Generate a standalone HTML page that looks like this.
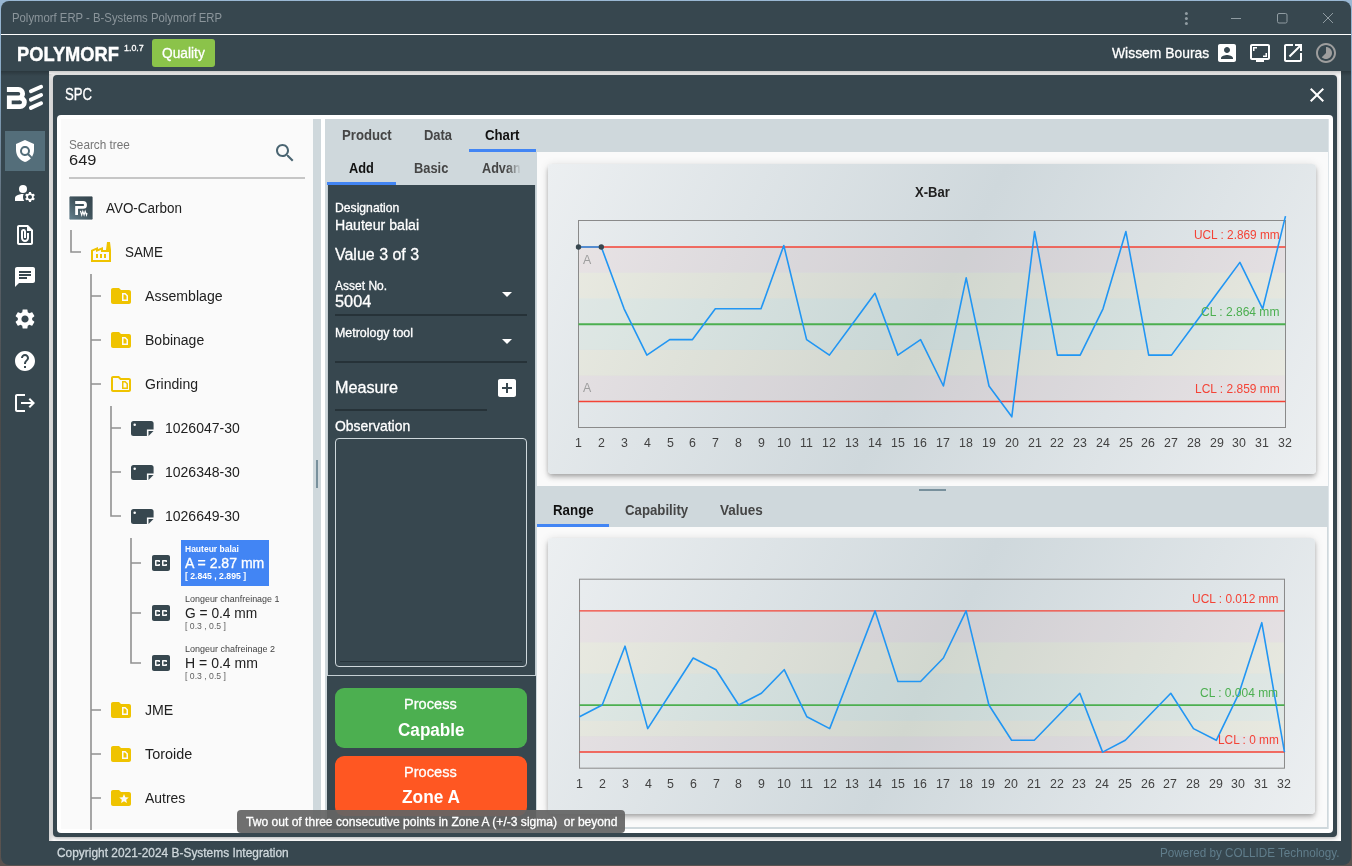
<!DOCTYPE html>
<html><head><meta charset="utf-8"><title>Polymorf ERP</title><style>html,body{margin:0;padding:0}body{width:1352px;height:866px;overflow:hidden;position:relative;background:linear-gradient(180deg,#9ab8d4 0,#86a6c2 90px,#5a6670 220px,#4b4a4a 420px,#5a5350 866px);font-family:"Liberation Sans",sans-serif}#r{position:absolute;left:0;top:0;width:1352px;height:866px;overflow:hidden}#r>div,#r>svg,#r>span{position:absolute;display:block;box-sizing:border-box}#r>span{white-space:pre;transform-origin:0 0}</style></head><body><div id="r">
<div style="left:1px;top:1px;width:1350px;height:863.6px;background:#37474f;border-radius:8px"></div>
<div style="left:1px;top:34px;width:1350px;height:1.2px;background:#fff;"></div>
<div style="left:49px;top:71px;width:1292px;height:770px;background:#fff;background:linear-gradient(#c9c9c9,#efefef 3px,#fff 6px,#fff)"></div>
<div style="left:1px;top:71px;width:48px;height:5px;background:;background:linear-gradient(rgba(0,0,0,.22),rgba(0,0,0,0))"></div>
<div style="left:1341px;top:71px;width:10px;height:5px;background:;background:linear-gradient(rgba(0,0,0,.22),rgba(0,0,0,0))"></div>
<div style="left:49px;top:74px;width:4.5px;height:767px;background:;background:linear-gradient(90deg,rgba(0,0,0,.16),rgba(0,0,0,0))"></div>
<div style="left:53px;top:75px;width:1284px;height:762px;background:#37474f;border-radius:4px;box-shadow:0 1px 4px rgba(0,0,0,.32)"></div>
<div style="left:57px;top:115px;width:1276px;height:718px;background:#fff;border-radius:4px"></div>
<div style="left:61px;top:119px;width:252px;height:710px;background:#fafafa;"></div>
<div style="left:313px;top:119px;width:8px;height:710px;background:#cfd8dc;"></div>
<div style="left:316px;top:460px;width:2px;height:28px;background:#78909c;"></div>
<div style="left:325px;top:119px;width:1003px;height:710px;background:#cfd8dc;"></div>
<div style="left:326.5px;top:185px;width:209px;height:644px;background:#37474f;"></div>
<div style="left:326.5px;top:185px;width:0.6px;height:491px;background:#c3cdd2;"></div>
<div style="left:534.8px;top:185px;width:0.7px;height:491px;background:#c3cdd2;"></div>
<div style="left:326.5px;top:675px;width:209px;height:1px;background:#c5cfd4;"></div>
<div style="left:1328px;top:119px;width:1.2px;height:710px;background:#dde4e8;"></div>
<div style="left:536.5px;top:152px;width:791.5px;height:334px;background:#fafafa;"></div>
<div style="left:536.5px;top:527px;width:790px;height:300px;background:#fafafa;"></div>
<svg style="left:1170px;top:0" width="180" height="34" viewBox="0 0 180 34" fill="none" stroke="#909ca2" stroke-width="1"><circle cx="16.4" cy="13.5" r="1.5" fill="#909ca2" stroke="none"/><circle cx="16.4" cy="18.5" r="1.5" fill="#909ca2" stroke="none"/><circle cx="16.4" cy="23.4" r="1.5" fill="#909ca2" stroke="none"/><path d="M61 18.5h10"/><rect x="107.5" y="13.5" width="9.5" height="9.5" rx="1.5"/><path d="M153 13l10 10M163 13l-10 10"/></svg>
<div style="left:152px;top:39px;width:63px;height:28px;background:#8bc34a;border-radius:3px"></div>
<svg style="left:1215px;top:41px" width="24" height="24" viewBox="0 0 24 24" fill="#fff"><path d="M3 5v14c0 1.1.89 2 2 2h14c1.1 0 2-.9 2-2V5c0-1.1-.9-2-2-2H5c-1.11 0-2 .9-2 2zm12 4c0 1.66-1.34 3-3 3s-3-1.34-3-3 1.340-3 3-3 3 1.340 3 3zm-9 8c0-2 4-3.100 6-3.100s6 1.100 6 3.100v1H6v-1z"/></svg>
<svg style="left:1248px;top:41px" width="24" height="24" viewBox="0 0 24 24" fill="#fff"><path d="M20 3H4c-1.110 0-2 .890-2 2v12c0 1.100.890 2 2 2h4v2h8v-2h4c1.100 0 2-.900 2-2V5c0-1.110-.900-2-2-2zm0 14H4V5h16v12z"/><path d="M6.500 7.500H9V6H5v4h1.500zM19 12h-1.500v2.500H15V16h4z"/></svg>
<svg style="left:1281px;top:41px" width="24" height="24" viewBox="0 0 24 24" fill="#fff"><path d="M19 19H5V5h7V3H5c-1.110 0-2 .900-2 2v14c0 1.100.890 2 2 2h14c1.100 0 2-.900 2-2v-7h-2v7zM14 3v2h3.590l-9.830 9.830 1.410 1.410L19 6.410V10h2V3h-7z"/></svg>
<svg style="left:1314px;top:41px" width="24" height="24" viewBox="0 0 24 24" fill="#9e9e9e"><path d="M16.240 7.760C15.070 6.590 13.540 6 12 6v6l-4.240 4.240c2.340 2.340 6.140 2.340 8.490 0 2.340-2.340 2.340-6.140-.010-8.480zM12 2C6.480 2 2 6.480 2 12s4.480 10 10 10 10-4.480 10-10S17.520 2 12 2zm0 18c-4.420 0-8-3.580-8-8s3.580-8 8-8 8 3.580 8 8-3.580 8-8 8z"/></svg>
<svg style="left:0;top:80px" width="50" height="36" viewBox="0 80 50 36" fill="none" stroke="#fff"><path d="M6.900 89.500H18.400a4.250 4.250 0 0 1 0 8.500H9.300V106.600H20.100a4.300 4.300 0 0 0 0-8.600" stroke-width="4.800" stroke-linejoin="miter"/><path d="M30.900 91.300L41.100 86.700M30.900 99.600L41.100 95M30.900 107.900L41.100 103.300" stroke-width="3.900" stroke-linecap="round"/></svg>
<div style="left:5px;top:131px;width:40px;height:40px;background:#546e7a;"></div>
<svg style="left:13px;top:139px" width="24" height="24" viewBox="0 0 24 24" fill="#fff"><path d="M21 5l-9-4-9 4v6c0 5.55 3.84 10.74 9 12 2.3-.56 4.33-1.9 5.88-3.71l-3.12-3.12c-1.94 1.29-4.58 1.07-6.29-.64-1.95-1.95-1.95-5.12 0-7.07 1.95-1.95 5.12-1.95 7.07 0 1.71 1.71 1.92 4.35.64 6.29l2.9 2.9C20.29 15.69 21 13.38 21 11V5z"/><circle cx="12" cy="12" r="3"/></svg>
<svg style="left:13px;top:181px" width="24" height="24" viewBox="0 0 24 24" fill="#fff"><circle cx="10" cy="8" r="4"/><path d="M10.67 13.02c-.22-.01-.44-.02-.67-.02-2.42 0-4.68.67-6.61 1.82-.88.52-1.39 1.5-1.39 2.53V20h9.26c-.79-1.13-1.26-2.51-1.26-4 0-1.07.25-2.07.67-2.98zM20.75 16c0-.22-.03-.42-.06-.63l1.14-1.01-1-1.73-1.45.49c-.32-.27-.68-.48-1.08-.63L18 11h-2l-.3 1.49c-.4.15-.76.36-1.08.63l-1.45-.49-1 1.73 1.14 1.01c-.03.21-.06.41-.06.63s.03.42.06.63l-1.14 1.01 1 1.73 1.45-.49c.32.27.68.48 1.08.63L16 21h2l.3-1.49c.4-.15.76-.36 1.08-.63l1.45.49 1-1.73-1.14-1.01c.03-.21.06-.41.06-.63zM17 18c-1.1 0-2-.9-2-2s.9-2 2-2 2 .9 2 2-.9 2-2 2z"/></svg>
<svg style="left:13px;top:223px" width="24" height="24" viewBox="0 0 24 24" fill="#fff"><path d="M15 2H6c-1.1 0-2 .9-2 2v16c0 1.1.9 2 2 2h12c1.1 0 2-.9 2-2V7l-5-5zM6 20V4h8v4h4v12H6zm10-10v5c0 2.21-1.79 4-4 4s-4-1.79-4-4V8.5c0-1.47 1.26-2.64 2.76-2.49 1.3.13 2.24 1.32 2.24 2.63V15h-2V8.5c0-.28-.22-.5-.5-.5s-.5.22-.5.5V15c0 1.1.9 2 2 2s2-.9 2-2v-5h2z"/></svg>
<svg style="left:13px;top:265px" width="24" height="24" viewBox="0 0 24 24" fill="#fff"><path d="M20 2H4c-1.1 0-1.99.9-1.99 2L2 22l4-4h14c1.1 0 2-.9 2-2V4c0-1.1-.9-2-2-2zM6 9h12v2H6V9zm8 5H6v-2h8v2zm4-6H6V6h12v2z"/></svg>
<svg style="left:13px;top:307px" width="24" height="24" viewBox="0 0 24 24" fill="#fff"><path d="M19.14 12.94c.04-.3.06-.61.06-.94 0-.32-.02-.64-.07-.94l2.03-1.58c.18-.14.23-.41.12-.61l-1.92-3.32c-.12-.22-.37-.29-.59-.22l-2.39.96c-.5-.38-1.03-.7-1.62-.94l-.36-2.54c-.04-.24-.24-.41-.48-.41h-3.84c-.24 0-.43.17-.47.41l-.36 2.54c-.59.24-1.13.57-1.62.94l-2.39-.96c-.22-.08-.47 0-.59.22L2.74 8.87c-.12.21-.08.47.12.61l2.03 1.58c-.05.3-.09.63-.09.94s.02.64.07.94l-2.03 1.58c-.18.14-.23.41-.12.61l1.92 3.32c.12.22.37.29.59.22l2.39-.96c.5.38 1.03.7 1.62.94l.36 2.54c.05.24.24.41.48.41h3.84c.24 0 .44-.17.47-.41l.36-2.54c.59-.24 1.13-.56 1.62-.94l2.39.96c.22.08.47 0 .59-.22l1.92-3.32c.12-.22.07-.47-.12-.61l-2.01-1.58zM12 15.6c-1.98 0-3.6-1.62-3.6-3.6s1.62-3.6 3.6-3.6 3.6 1.62 3.6 3.6-1.62 3.6-3.6 3.6z"/></svg>
<svg style="left:13px;top:349px" width="24" height="24" viewBox="0 0 24 24" fill="#fff"><path d="M12 2C6.48 2 2 6.48 2 12s4.48 10 10 10 10-4.48 10-10S17.52 2 12 2zm1 17h-2v-2h2v2zm2.07-7.75l-.9.92C13.45 12.9 13 13.5 13 15h-2v-.5c0-1.1.45-2.1 1.17-2.83l1.24-1.26c.37-.36.59-.86.59-1.41 0-1.1-.9-2-2-2s-2 .9-2 2H8c0-2.21 1.79-4 4-4s4 1.79 4 4c0 .88-.36 1.68-.93 2.25z"/></svg>
<svg style="left:13px;top:391px" width="24" height="24" viewBox="0 0 24 24" fill="#fff"><path d="M17 7l-1.41 1.41L18.17 11H8v2h10.17l-2.58 2.58L17 17l5-5zM4 5h8V3H4c-1.1 0-2 .9-2 2v14c0 1.1.9 2 2 2h8v-2H4V5z"/></svg>
<svg style="left:1305px;top:83px" width="24" height="24" viewBox="0 0 24 24" fill="#fff"><path d="M19 6.410L17.590 5 12 10.590 6.410 5 5 6.410 10.590 12 5 17.590 6.410 19 12 13.410 17.590 19 19 17.590 13.410 12z"/></svg>
<div style="left:69px;top:177px;width:236px;height:1.5px;background:#c6c6c6;"></div>
<svg style="left:273px;top:141.3px" width="24" height="24" viewBox="0 0 24 24" fill="#4a6572"><path d="M15.500 14h-.790l-.280-.270C15.410 12.590 16 11.110 16 9.500 16 5.910 13.090 3 9.500 3S3 5.910 3 9.500 5.910 16 9.500 16c1.610 0 3.090-.590 4.230-1.570l.270.280v.790l5 4.990L20.490 19l-4.990-5zm-6 0C7.010 14 5 11.990 5 9.500S7.010 5 9.500 5 14 7.010 14 9.500 11.990 14 9.500 14z"/></svg>
<svg style="left:68px;top:195px" width="26" height="26" viewBox="-1 -1 26 26"><defs><linearGradient id="ag" x1="1" y1="0" x2="0" y2="1"><stop offset="0" stop-color="#33444c"/><stop offset=".45" stop-color="#3f525b"/><stop offset="1" stop-color="#65828f"/></linearGradient></defs><rect x="0" y="0" width="24" height="24" rx="1.500" fill="url(#ag)" stroke="#fff" stroke-width=".8"/><path d="M6.200 6.500H14.100a2.450 2.450 0 0 1 0 4.900H7.600V19" fill="none" stroke="#fff" stroke-width="2.800"/><path d="M11.400 14.900L12.700 19 13.800 15.300 15.100 19 16.200 15.300 17.500 19 18 17" fill="none" stroke="#fff" stroke-width="1.150"/></svg>
<svg style="left:60px;top:220px" width="100" height="610" viewBox="60 220 100 610" fill="none" stroke="#919191" stroke-width="1.600"><path d="M71 230V252H81"/><path d="M91 274V830M91 296H101M91 340H101M91 384H101M91 710H101M91 754H101M91 798H101"/><path d="M111 406V516H121M111 428H121M111 472H121"/><path d="M131 538V663H141M131 563H141M131 613H141"/></svg>
<svg style="left:89px;top:240px" width="24" height="24" viewBox="0 0 24 24" fill="#efc300"><path d="M22 22H2V10l7-3v2l5-2v3h3l1-8h3l1 8V22zM12 9.950l-5 2V10l-3 1.320V20h16v-8h-8V9.950zM11 18h2v-4h-2V18zM7 18h2v-4H7V18zM17 14h-2v4h2V14z"/></svg>
<svg style="left:109px;top:284px" width="24" height="24" viewBox="0 0 24 24" fill="#efc300"><path d="M15.880 10.500l1.620 1.620v3.380l-3 0v-5H15.880zM22 8v10c0 1.100-.900 2-2 2H4c-1.100 0-2-.900-2-2L2.010 6C2.010 4.900 2.900 4 4 4h6l2 2h8C21.100 6 22 6.900 22 8zM19 11.500L16.500 9H13v8h6V11.500z"/></svg>
<svg style="left:109px;top:328px" width="24" height="24" viewBox="0 0 24 24" fill="#efc300"><path d="M15.880 10.500l1.620 1.620v3.380l-3 0v-5H15.880zM22 8v10c0 1.100-.900 2-2 2H4c-1.100 0-2-.900-2-2L2.010 6C2.010 4.900 2.900 4 4 4h6l2 2h8C21.100 6 22 6.900 22 8zM19 11.500L16.500 9H13v8h6V11.500z"/></svg>
<svg style="left:109px;top:372px" width="24" height="24" viewBox="0 0 24 24" fill="#efc300"><path d="M20 6h-8l-2-2H4C2.900 4 2.010 4.900 2.010 6L2 18c0 1.100.900 2 2 2h16c1.100 0 2-.900 2-2V8C22 6.900 21.100 6 20 6zM20 18H4V6h5.170l2 2H20V18zM17.500 12.120v3.380l-3 0v-5h1.380L17.500 12.120zM13 9v8l6 0v-5.500L16.500 9H13z"/></svg>
<svg style="left:109px;top:698px" width="24" height="24" viewBox="0 0 24 24" fill="#efc300"><path d="M15.880 10.500l1.620 1.620v3.380l-3 0v-5H15.880zM22 8v10c0 1.100-.900 2-2 2H4c-1.100 0-2-.900-2-2L2.010 6C2.010 4.900 2.900 4 4 4h6l2 2h8C21.100 6 22 6.900 22 8zM19 11.500L16.500 9H13v8h6V11.500z"/></svg>
<svg style="left:109px;top:742px" width="24" height="24" viewBox="0 0 24 24" fill="#efc300"><path d="M15.880 10.500l1.620 1.620v3.380l-3 0v-5H15.880zM22 8v10c0 1.100-.900 2-2 2H4c-1.100 0-2-.900-2-2L2.010 6C2.010 4.900 2.900 4 4 4h6l2 2h8C21.100 6 22 6.900 22 8zM19 11.500L16.500 9H13v8h6V11.500z"/></svg>
<svg style="left:109px;top:786px" width="24" height="24" viewBox="0 0 24 24" fill="#efc300"><path d="M20 6h-8l-2-2H4c-1.100 0-1.990.900-1.990 2L2 18c0 1.100.900 2 2 2h16c1.100 0 2-.900 2-2V8c0-1.100-.900-2-2-2zm-2.060 11L15 15.280 12.060 17l.780-3.330-2.590-2.240 3.410-.290L15 8l1.340 3.140 3.410.290-2.590 2.240.780 3.330z"/></svg>
<svg style="left:129px;top:418px" width="27" height="20" viewBox="-2 -3 27 20"><path d="M2.500 0H20.100a2.500 2.500 0 0 1 2.500 2.500V8.400H15.900V15H2.500A2.500 2.500 0 0 1 0 12.500V2.500A2.500 2.500 0 0 1 2.500 0z" fill="#37474f" stroke="#fff" stroke-width="1" paint-order="stroke"/><path d="M17.500 10H22.500L17.500 15z" fill="#37474f"/><circle cx="3.700" cy="3.800" r="1.250" fill="#fff"/></svg>
<svg style="left:129px;top:462px" width="27" height="20" viewBox="-2 -3 27 20"><path d="M2.500 0H20.100a2.500 2.500 0 0 1 2.500 2.500V8.400H15.900V15H2.500A2.500 2.500 0 0 1 0 12.500V2.500A2.500 2.500 0 0 1 2.500 0z" fill="#37474f" stroke="#fff" stroke-width="1" paint-order="stroke"/><path d="M17.500 10H22.500L17.500 15z" fill="#37474f"/><circle cx="3.700" cy="3.800" r="1.250" fill="#fff"/></svg>
<svg style="left:129px;top:506px" width="27" height="20" viewBox="-2 -3 27 20"><path d="M2.500 0H20.100a2.500 2.500 0 0 1 2.500 2.500V8.400H15.900V15H2.500A2.500 2.500 0 0 1 0 12.500V2.500A2.500 2.500 0 0 1 2.500 0z" fill="#37474f" stroke="#fff" stroke-width="1" paint-order="stroke"/><path d="M17.500 10H22.500L17.500 15z" fill="#37474f"/><circle cx="3.700" cy="3.800" r="1.250" fill="#fff"/></svg>
<div style="left:181px;top:540px;width:88px;height:46px;background:#4285f4;"></div>
<svg style="left:149px;top:551px" width="24" height="24" viewBox="0 0 24 24" fill="#37474f"><path d="M19 4H5c-1.110 0-2 .900-2 2v12c0 1.100.890 2 2 2h14c1.100 0 2-.900 2-2V6c0-1.100-.900-2-2-2zm-8 7H9.500v-.500h-2v3h2V13H11v1c0 .550-.450 1-1 1H7c-.550 0-1-.450-1-1v-4c0-.550.450-1 1-1h3c.550 0 1 .450 1 1v1zm7 0h-1.500v-.500h-2v3h2V13H18v1c0 .550-.450 1-1 1h-3c-.550 0-1-.450-1-1v-4c0-.550.450-1 1-1h3c.550 0 1 .450 1 1v1z"/></svg>
<svg style="left:149px;top:601px" width="24" height="24" viewBox="0 0 24 24" fill="#37474f"><path d="M19 4H5c-1.110 0-2 .900-2 2v12c0 1.100.890 2 2 2h14c1.100 0 2-.900 2-2V6c0-1.100-.900-2-2-2zm-8 7H9.500v-.500h-2v3h2V13H11v1c0 .550-.450 1-1 1H7c-.550 0-1-.450-1-1v-4c0-.550.450-1 1-1h3c.550 0 1 .450 1 1v1zm7 0h-1.500v-.500h-2v3h2V13H18v1c0 .550-.450 1-1 1h-3c-.550 0-1-.450-1-1v-4c0-.550.450-1 1-1h3c.550 0 1 .450 1 1v1z"/></svg>
<svg style="left:149px;top:651px" width="24" height="24" viewBox="0 0 24 24" fill="#37474f"><path d="M19 4H5c-1.110 0-2 .900-2 2v12c0 1.100.890 2 2 2h14c1.100 0 2-.900 2-2V6c0-1.100-.900-2-2-2zm-8 7H9.500v-.500h-2v3h2V13H11v1c0 .550-.450 1-1 1H7c-.550 0-1-.450-1-1v-4c0-.550.450-1 1-1h3c.550 0 1 .450 1 1v1zm7 0h-1.500v-.500h-2v3h2V13H18v1c0 .550-.450 1-1 1h-3c-.550 0-1-.450-1-1v-4c0-.550.450-1 1-1h3c.550 0 1 .450 1 1v1z"/></svg>
<div style="left:469px;top:149px;width:67px;height:3px;background:#4285f4;"></div>
<div style="left:327px;top:182px;width:69.3px;height:3px;background:#4285f4;"></div>
<svg style="left:495.2px;top:282px" width="24" height="24" viewBox="0 0 24 24" fill="#fff"><path d="M7 10l5 5 5-5z"/></svg>
<div style="left:335.3px;top:314.3px;width:191.6px;height:1.5px;background:#263238;"></div>
<svg style="left:495.2px;top:329px" width="24" height="24" viewBox="0 0 24 24" fill="#fff"><path d="M7 10l5 5 5-5z"/></svg>
<div style="left:335.3px;top:361.4px;width:191.6px;height:1.5px;background:#263238;"></div>
<svg style="left:494.8px;top:376px" width="24" height="24" viewBox="0 0 24 24" fill="#fff"><path d="M19 3H5c-1.110 0-2 .900-2 2v14c0 1.100.890 2 2 2h14c1.100 0 2-.900 2-2V5c0-1.100-.900-2-2-2zm-2 10h-4v4h-2v-4H7v-2h4V7h2v4h4v2z"/></svg>
<div style="left:335.3px;top:409.2px;width:151.6px;height:1.5px;background:#263238;"></div>
<div style="left:335.2px;top:438.400px;width:191.700px;height:228.400px;border:1px solid #cfd8dc;border-radius:4px"></div>
<div style="left:340px;top:661.2px;width:182px;height:1.3px;background:#27343b;"></div>
<div style="left:335.2px;top:688px;width:192px;height:60px;background:#4caf50;border-radius:9px"></div>
<div style="left:335.2px;top:756px;width:192px;height:60px;background:#ff5722;border-radius:9px"></div>
<div style="left:919px;top:489px;width:26.5px;height:1.8px;background:#78909c;"></div>
<div style="left:537px;top:523.8px;width:72px;height:3.2px;background:#4285f4;"></div>
<div style="left:548px;top:164px;width:768px;height:310px;border-radius:4px;background:linear-gradient(116deg,#eceff1,#cfd8dc,#eceff1);box-shadow:0 2px 4px -1px rgba(0,0,0,.2),0 4px 5px 0 rgba(0,0,0,.14),0 1px 10px 0 rgba(0,0,0,.12)"></div><svg style="left:548px;top:164px" width="768" height="310" viewBox="548 164 768 310"><rect x="578.5" y="247.00" width="707.0" height="25.73" fill="rgba(244,67,54,.05)"/><rect x="578.5" y="375.67" width="707.0" height="25.73" fill="rgba(244,67,54,.05)"/><rect x="578.5" y="272.73" width="707.0" height="25.73" fill="rgba(255,193,7,.055)"/><rect x="578.5" y="349.93" width="707.0" height="25.73" fill="rgba(255,193,7,.055)"/><rect x="578.5" y="298.47" width="707.0" height="25.73" fill="rgba(76,175,80,.045)"/><rect x="578.5" y="324.20" width="707.0" height="25.73" fill="rgba(76,175,80,.045)"/><rect x="578.5" y="220.5" width="707.0" height="207.0" fill="none" stroke="#8a8a8a" stroke-width="1"/><path d="M578.5 247H1285.5M578.5 401.4H1285.5" stroke="#f44336" stroke-width="1.450" fill="none"/><path d="M578.5 324.2H1285.5" stroke="#4caf50" stroke-width="1.850" fill="none"/><polyline points="578.5,247.0 601.3,247.0 624.1,308.8 646.9,355.1 669.7,339.6 692.5,339.6 715.3,308.8 738.1,308.8 761.0,308.8 783.8,245.5 806.6,339.6 829.4,355.1 852.2,324.2 875.0,293.3 897.8,355.1 920.6,339.6 943.4,386.0 966.2,277.9 989.0,386.0 1011.8,416.8 1034.6,231.6 1057.4,355.1 1080.2,355.1 1103.0,308.8 1125.9,231.6 1148.7,355.1 1171.5,355.1 1194.3,324.2 1217.1,293.3 1239.9,262.4 1262.7,308.8 1285.5,216.1" fill="none" stroke="#2196f3" stroke-width="1.600" stroke-linejoin="round"/><circle cx="578.5" cy="247.0" r="2.700" fill="#37474f"/><circle cx="601.3" cy="247.0" r="2.700" fill="#37474f"/></svg>
<div style="left:548px;top:538.3px;width:767px;height:276.2px;border-radius:4px;background:linear-gradient(116deg,#eceff1,#cfd8dc,#eceff1);box-shadow:0 2px 4px -1px rgba(0,0,0,.2),0 4px 5px 0 rgba(0,0,0,.14),0 1px 10px 0 rgba(0,0,0,.12)"></div><svg style="left:548px;top:538.3px" width="767" height="276.2" viewBox="548 538.3 767 276.2"><rect x="579.5" y="611.20" width="705.0" height="31.40" fill="rgba(244,67,54,.05)"/><rect x="579.5" y="736.73" width="705.0" height="15.67" fill="rgba(244,67,54,.05)"/><rect x="579.5" y="642.60" width="705.0" height="31.40" fill="rgba(255,193,7,.055)"/><rect x="579.5" y="721.07" width="705.0" height="15.67" fill="rgba(255,193,7,.055)"/><rect x="579.5" y="674.00" width="705.0" height="31.40" fill="rgba(76,175,80,.045)"/><rect x="579.5" y="705.40" width="705.0" height="15.67" fill="rgba(76,175,80,.045)"/><rect x="579.5" y="579.5" width="705.0" height="189.0" fill="none" stroke="#8a8a8a" stroke-width="1"/><path d="M579.5 611.2H1284.5M579.5 752.4H1284.5" stroke="#f44336" stroke-width="1.450" fill="none"/><path d="M579.5 705.4H1284.5" stroke="#4caf50" stroke-width="1.850" fill="none"/><polyline points="579.5,717.1 602.2,705.3 625.0,646.5 647.7,728.9 670.5,693.6 693.2,658.3 716.0,670.0 738.7,705.3 761.4,693.6 784.2,670.0 806.9,717.1 829.7,728.9 852.4,670.0 875.1,611.2 897.9,681.8 920.6,681.8 943.4,658.3 966.1,611.2 988.9,705.3 1011.6,740.6 1034.3,740.6 1057.1,717.1 1079.8,693.6 1102.6,752.4 1125.3,740.6 1148.0,717.1 1170.8,693.6 1193.5,728.9 1216.3,740.6 1239.0,693.6 1261.8,623.0 1284.5,752.4" fill="none" stroke="#2196f3" stroke-width="1.600" stroke-linejoin="round"/></svg>
<div style="left:237.3px;top:810.3px;width:387.7px;height:22.7px;background:rgba(100,100,100,.93);border-radius:4px"></div>
<span style="left:12.24px;top:12px;font-size:12.5px;line-height:12.5px;color:#8b959b;transform:scaleX(0.9064);">Polymorf ERP - B-Systems Polymorf ERP</span>
<span style="left:17.29px;top:44px;font-size:20.97px;line-height:20.97px;color:#fff;font-weight:700;transform:scaleX(0.8723);-webkit-text-stroke:.45px #fff;">POLYMORF</span>
<span style="left:124.26px;top:43px;font-size:9.4px;line-height:9.4px;color:#fff;transform:scaleX(0.9486);-webkit-text-stroke:.3px #fff;">1.0.7</span>
<span style="left:161.67px;top:45px;font-size:15.49px;line-height:15.49px;color:#fff;transform:scaleX(0.8869);-webkit-text-stroke:.3px #fff;">Quality</span>
<span style="left:1112.17px;top:45px;font-size:15.49px;line-height:15.49px;color:#fff;transform:scaleX(0.8968);-webkit-text-stroke:.3px #fff;">Wissem Bouras</span>
<span style="left:64.70px;top:87px;font-size:16.01px;line-height:16.01px;color:#fff;transform:scaleX(0.8236);-webkit-text-stroke:.3px #fff;">SPC</span>
<span style="left:69.03px;top:139px;font-size:12.4px;line-height:12.4px;color:#757575;transform:scaleX(0.9489);">Search tree</span>
<span style="left:68.88px;top:152px;font-size:15.49px;line-height:15.49px;color:#212121;transform:scaleX(1.0600);">649</span>
<span style="left:105.59px;top:200px;font-size:15.49px;line-height:15.49px;color:#212121;transform:scaleX(0.8673);">AVO-Carbon</span>
<span style="left:125.20px;top:244px;font-size:15.49px;line-height:15.49px;color:#212121;transform:scaleX(0.8630);">SAME</span>
<span style="left:145.39px;top:288px;font-size:15.49px;line-height:15.49px;color:#212121;transform:scaleX(0.9111);">Assemblage</span>
<span style="left:144.83px;top:332px;font-size:15.49px;line-height:15.49px;color:#212121;transform:scaleX(0.9044);">Bobinage</span>
<span style="left:145.05px;top:376px;font-size:15.49px;line-height:15.49px;color:#212121;transform:scaleX(0.9065);">Grinding</span>
<span style="left:145.29px;top:702px;font-size:15.49px;line-height:15.49px;color:#212121;transform:scaleX(0.9144);">JME</span>
<span style="left:145.24px;top:746px;font-size:15.49px;line-height:15.49px;color:#212121;transform:scaleX(0.9292);">Toroide</span>
<span style="left:145.39px;top:790px;font-size:15.49px;line-height:15.49px;color:#212121;transform:scaleX(0.9006);">Autres</span>
<span style="left:164.97px;top:420px;font-size:15.49px;line-height:15.49px;color:#212121;transform:scaleX(0.9046);">1026047-30</span>
<span style="left:164.97px;top:464px;font-size:15.49px;line-height:15.49px;color:#212121;transform:scaleX(0.9046);">1026348-30</span>
<span style="left:164.97px;top:508px;font-size:15.49px;line-height:15.49px;color:#212121;transform:scaleX(0.9046);">1026649-30</span>
<span style="left:184.82px;top:544px;font-size:9.5px;line-height:9.5px;color:#fff;font-weight:700;transform:scaleX(0.8953);">Hauteur balai</span>
<span style="left:185.09px;top:555px;font-size:15.49px;line-height:15.49px;color:#fff;transform:scaleX(0.9082);-webkit-text-stroke:.35px #fff;">A = 2.87 mm</span>
<span style="left:184.86px;top:571px;font-size:9.5px;line-height:9.5px;color:#fff;font-weight:700;transform:scaleX(0.9098);">[ 2.845 , 2.895 ]</span>
<span style="left:184.73px;top:594px;font-size:9.5px;line-height:9.5px;color:#424242;transform:scaleX(0.9417);">Longeur chanfreinage 1</span>
<span style="left:184.75px;top:605px;font-size:15.49px;line-height:15.49px;color:#212121;transform:scaleX(0.8884);">G = 0.4 mm</span>
<span style="left:184.79px;top:621px;font-size:9.5px;line-height:9.5px;color:#616161;transform:scaleX(0.9117);">[ 0.3 , 0.5 ]</span>
<span style="left:184.73px;top:644px;font-size:9.5px;line-height:9.5px;color:#424242;transform:scaleX(0.9468);">Longeur chafreinage 2</span>
<span style="left:184.52px;top:655px;font-size:15.49px;line-height:15.49px;color:#212121;transform:scaleX(0.9072);">H = 0.4 mm</span>
<span style="left:184.79px;top:671px;font-size:9.5px;line-height:9.5px;color:#616161;transform:scaleX(0.9117);">[ 0.3 , 0.5 ]</span>
<span style="left:341.86px;top:128px;font-size:14.46px;line-height:14.46px;color:#454545;font-weight:700;transform:scaleX(0.9101);">Product</span>
<span style="left:424.17px;top:128px;font-size:14.46px;line-height:14.46px;color:#454545;font-weight:700;transform:scaleX(0.8954);">Data</span>
<span style="left:485.23px;top:128px;font-size:14.46px;line-height:14.46px;color:#111;font-weight:700;transform:scaleX(0.9148);">Chart</span>
<span style="left:349.24px;top:161px;font-size:14.46px;line-height:14.46px;color:#111;font-weight:700;transform:scaleX(0.8860);">Add</span>
<span style="left:413.77px;top:161px;font-size:14.46px;line-height:14.46px;color:#454545;font-weight:700;transform:scaleX(0.8893);">Basic</span>
<span style="left:481.84px;top:161px;font-size:14.46px;line-height:14.46px;color:#454545;font-weight:700;transform:scaleX(0.8757);width:calc(40px / 0.8757);overflow:hidden;-webkit-mask-image:linear-gradient(90deg,#000 62%,transparent 97%);mask-image:linear-gradient(90deg,#000 62%,transparent 97%);">Advanced</span>
<span style="left:334.80px;top:202px;font-size:12.4px;line-height:12.4px;color:#fff;transform:scaleX(0.9822);-webkit-text-stroke:.3px #fff;">Designation</span>
<span style="left:334.72px;top:217px;font-size:14.98px;line-height:14.98px;color:#fff;transform:scaleX(0.9437);-webkit-text-stroke:.3px #fff;">Hauteur balai</span>
<span style="left:335.26px;top:247px;font-size:16.53px;line-height:16.53px;color:#fff;transform:scaleX(0.9678);-webkit-text-stroke:.3px #fff;">Value 3 of 3</span>
<span style="left:335.29px;top:280px;font-size:12.4px;line-height:12.4px;color:#fff;transform:scaleX(0.9701);-webkit-text-stroke:.3px #fff;">Asset No.</span>
<span style="left:334.97px;top:294px;font-size:16.53px;line-height:16.53px;color:#fff;transform:scaleX(0.9879);-webkit-text-stroke:.3px #fff;">5004</span>
<span style="left:334.79px;top:327px;font-size:12.4px;line-height:12.4px;color:#fff;transform:scaleX(1.0027);-webkit-text-stroke:.3px #fff;">Metrology tool</span>
<span style="left:334.64px;top:380px;font-size:16.53px;line-height:16.53px;color:#fff;transform:scaleX(0.9801);-webkit-text-stroke:.3px #fff;">Measure</span>
<span style="left:334.97px;top:418px;font-size:14.98px;line-height:14.98px;color:#fff;transform:scaleX(0.9321);-webkit-text-stroke:.3px #fff;">Observation</span>
<span style="left:404.30px;top:696px;font-size:15.49px;line-height:15.49px;color:#fff;transform:scaleX(0.9426);-webkit-text-stroke:.3px #fff;">Process</span>
<span style="left:397.65px;top:721px;font-size:18.59px;line-height:18.59px;color:#fff;font-weight:700;transform:scaleX(0.9212);">Capable</span>
<span style="left:404.30px;top:764px;font-size:15.49px;line-height:15.49px;color:#fff;transform:scaleX(0.9426);-webkit-text-stroke:.3px #fff;">Process</span>
<span style="left:401.98px;top:788px;font-size:18.59px;line-height:18.59px;color:#fff;font-weight:700;transform:scaleX(0.9310);">Zone A</span>
<span style="left:552.55px;top:503px;font-size:14.46px;line-height:14.46px;color:#111;font-weight:700;transform:scaleX(0.9214);">Range</span>
<span style="left:624.83px;top:503px;font-size:14.46px;line-height:14.46px;color:#454545;font-weight:700;transform:scaleX(0.9155);">Capability</span>
<span style="left:720.25px;top:503px;font-size:14.46px;line-height:14.46px;color:#454545;font-weight:700;transform:scaleX(0.9342);">Values</span>
<span style="left:575.38px;top:437px;font-size:12.4px;line-height:12.4px;color:#424242;transform:scaleX(0.9980);">1</span>
<span style="left:598.32px;top:437px;font-size:12.4px;line-height:12.4px;color:#424242;transform:scaleX(0.9980);">2</span>
<span style="left:621.13px;top:437px;font-size:12.4px;line-height:12.4px;color:#424242;transform:scaleX(0.9980);">3</span>
<span style="left:643.90px;top:437px;font-size:12.4px;line-height:12.4px;color:#424242;transform:scaleX(0.9980);">4</span>
<span style="left:666.64px;top:437px;font-size:12.4px;line-height:12.4px;color:#424242;transform:scaleX(0.9980);">5</span>
<span style="left:689.36px;top:437px;font-size:12.4px;line-height:12.4px;color:#424242;transform:scaleX(0.9980);">6</span>
<span style="left:712.17px;top:437px;font-size:12.4px;line-height:12.4px;color:#424242;transform:scaleX(0.9980);">7</span>
<span style="left:734.94px;top:437px;font-size:12.4px;line-height:12.4px;color:#424242;transform:scaleX(0.9980);">8</span>
<span style="left:757.72px;top:437px;font-size:12.4px;line-height:12.4px;color:#424242;transform:scaleX(0.9980);">9</span>
<span style="left:776.81px;top:437px;font-size:12.4px;line-height:12.4px;color:#424242;transform:scaleX(0.9980);">10</span>
<span style="left:800.10px;top:437px;font-size:12.4px;line-height:12.4px;color:#424242;transform:scaleX(0.9980);">11</span>
<span style="left:822.42px;top:437px;font-size:12.4px;line-height:12.4px;color:#424242;transform:scaleX(0.9980);">12</span>
<span style="left:845.15px;top:437px;font-size:12.4px;line-height:12.4px;color:#424242;transform:scaleX(0.9980);">13</span>
<span style="left:867.83px;top:437px;font-size:12.4px;line-height:12.4px;color:#424242;transform:scaleX(0.9980);">14</span>
<span style="left:890.68px;top:437px;font-size:12.4px;line-height:12.4px;color:#424242;transform:scaleX(0.9980);">15</span>
<span style="left:913.47px;top:437px;font-size:12.4px;line-height:12.4px;color:#424242;transform:scaleX(0.9980);">16</span>
<span style="left:936.28px;top:437px;font-size:12.4px;line-height:12.4px;color:#424242;transform:scaleX(0.9980);">17</span>
<span style="left:959.01px;top:437px;font-size:12.4px;line-height:12.4px;color:#424242;transform:scaleX(0.9980);">18</span>
<span style="left:981.80px;top:437px;font-size:12.4px;line-height:12.4px;color:#424242;transform:scaleX(0.9980);">19</span>
<span style="left:1004.68px;top:437px;font-size:12.4px;line-height:12.4px;color:#424242;transform:scaleX(0.9980);">20</span>
<span style="left:1027.51px;top:437px;font-size:12.4px;line-height:12.4px;color:#424242;transform:scaleX(0.9980);">21</span>
<span style="left:1050.29px;top:437px;font-size:12.4px;line-height:12.4px;color:#424242;transform:scaleX(0.9980);">22</span>
<span style="left:1073.02px;top:437px;font-size:12.4px;line-height:12.4px;color:#424242;transform:scaleX(0.9980);">23</span>
<span style="left:1095.70px;top:437px;font-size:12.4px;line-height:12.4px;color:#424242;transform:scaleX(0.9980);">24</span>
<span style="left:1118.55px;top:437px;font-size:12.4px;line-height:12.4px;color:#424242;transform:scaleX(0.9980);">25</span>
<span style="left:1141.34px;top:437px;font-size:12.4px;line-height:12.4px;color:#424242;transform:scaleX(0.9980);">26</span>
<span style="left:1164.15px;top:437px;font-size:12.4px;line-height:12.4px;color:#424242;transform:scaleX(0.9980);">27</span>
<span style="left:1186.88px;top:437px;font-size:12.4px;line-height:12.4px;color:#424242;transform:scaleX(0.9980);">28</span>
<span style="left:1209.67px;top:437px;font-size:12.4px;line-height:12.4px;color:#424242;transform:scaleX(0.9980);">29</span>
<span style="left:1232.47px;top:437px;font-size:12.4px;line-height:12.4px;color:#424242;transform:scaleX(0.9980);">30</span>
<span style="left:1255.30px;top:437px;font-size:12.4px;line-height:12.4px;color:#424242;transform:scaleX(0.9980);">31</span>
<span style="left:1278.08px;top:437px;font-size:12.4px;line-height:12.4px;color:#424242;transform:scaleX(0.9980);">32</span>
<span style="left:1193.59px;top:229px;font-size:12.4px;line-height:12.4px;color:#f44336;transform:scaleX(0.9548);">UCL : 2.869 mm</span>
<span style="left:1200.89px;top:306px;font-size:12.4px;line-height:12.4px;color:#4caf50;transform:scaleX(0.9702);">CL : 2.864 mm</span>
<span style="left:1194.52px;top:383px;font-size:12.4px;line-height:12.4px;color:#f44336;transform:scaleX(0.9666);">LCL : 2.859 mm</span>
<span style="left:914.69px;top:184px;font-size:15.29px;line-height:15.29px;color:#212121;font-weight:700;transform:scaleX(0.8515);">X-Bar</span>
<span style="left:583.19px;top:254px;font-size:12.4px;line-height:12.4px;color:#9e9e9e;transform:scaleX(0.9980);">A</span>
<span style="left:583.19px;top:382px;font-size:12.4px;line-height:12.4px;color:#9e9e9e;transform:scaleX(0.9980);">A</span>
<span style="left:576.18px;top:778px;font-size:12.4px;line-height:12.4px;color:#424242;transform:scaleX(0.9980);">1</span>
<span style="left:599.05px;top:778px;font-size:12.4px;line-height:12.4px;color:#424242;transform:scaleX(0.9980);">2</span>
<span style="left:621.80px;top:778px;font-size:12.4px;line-height:12.4px;color:#424242;transform:scaleX(0.9980);">3</span>
<span style="left:644.51px;top:778px;font-size:12.4px;line-height:12.4px;color:#424242;transform:scaleX(0.9980);">4</span>
<span style="left:667.18px;top:778px;font-size:12.4px;line-height:12.4px;color:#424242;transform:scaleX(0.9980);">5</span>
<span style="left:689.84px;top:778px;font-size:12.4px;line-height:12.4px;color:#424242;transform:scaleX(0.9980);">6</span>
<span style="left:712.58px;top:778px;font-size:12.4px;line-height:12.4px;color:#424242;transform:scaleX(0.9980);">7</span>
<span style="left:735.29px;top:778px;font-size:12.4px;line-height:12.4px;color:#424242;transform:scaleX(0.9980);">8</span>
<span style="left:758.00px;top:778px;font-size:12.4px;line-height:12.4px;color:#424242;transform:scaleX(0.9980);">9</span>
<span style="left:777.03px;top:778px;font-size:12.4px;line-height:12.4px;color:#424242;transform:scaleX(0.9980);">10</span>
<span style="left:800.26px;top:778px;font-size:12.4px;line-height:12.4px;color:#424242;transform:scaleX(0.9980);">11</span>
<span style="left:822.51px;top:778px;font-size:12.4px;line-height:12.4px;color:#424242;transform:scaleX(0.9980);">12</span>
<span style="left:845.18px;top:778px;font-size:12.4px;line-height:12.4px;color:#424242;transform:scaleX(0.9980);">13</span>
<span style="left:867.79px;top:778px;font-size:12.4px;line-height:12.4px;color:#424242;transform:scaleX(0.9980);">14</span>
<span style="left:890.58px;top:778px;font-size:12.4px;line-height:12.4px;color:#424242;transform:scaleX(0.9980);">15</span>
<span style="left:913.30px;top:778px;font-size:12.4px;line-height:12.4px;color:#424242;transform:scaleX(0.9980);">16</span>
<span style="left:936.04px;top:778px;font-size:12.4px;line-height:12.4px;color:#424242;transform:scaleX(0.9980);">17</span>
<span style="left:958.71px;top:778px;font-size:12.4px;line-height:12.4px;color:#424242;transform:scaleX(0.9980);">18</span>
<span style="left:981.44px;top:778px;font-size:12.4px;line-height:12.4px;color:#424242;transform:scaleX(0.9980);">19</span>
<span style="left:1004.25px;top:778px;font-size:12.4px;line-height:12.4px;color:#424242;transform:scaleX(0.9980);">20</span>
<span style="left:1027.02px;top:778px;font-size:12.4px;line-height:12.4px;color:#424242;transform:scaleX(0.9980);">21</span>
<span style="left:1049.74px;top:778px;font-size:12.4px;line-height:12.4px;color:#424242;transform:scaleX(0.9980);">22</span>
<span style="left:1072.40px;top:778px;font-size:12.4px;line-height:12.4px;color:#424242;transform:scaleX(0.9980);">23</span>
<span style="left:1095.02px;top:778px;font-size:12.4px;line-height:12.4px;color:#424242;transform:scaleX(0.9980);">24</span>
<span style="left:1117.80px;top:778px;font-size:12.4px;line-height:12.4px;color:#424242;transform:scaleX(0.9980);">25</span>
<span style="left:1140.52px;top:778px;font-size:12.4px;line-height:12.4px;color:#424242;transform:scaleX(0.9980);">26</span>
<span style="left:1163.27px;top:778px;font-size:12.4px;line-height:12.4px;color:#424242;transform:scaleX(0.9980);">27</span>
<span style="left:1185.93px;top:778px;font-size:12.4px;line-height:12.4px;color:#424242;transform:scaleX(0.9980);">28</span>
<span style="left:1208.66px;top:778px;font-size:12.4px;line-height:12.4px;color:#424242;transform:scaleX(0.9980);">29</span>
<span style="left:1231.39px;top:778px;font-size:12.4px;line-height:12.4px;color:#424242;transform:scaleX(0.9980);">30</span>
<span style="left:1254.16px;top:778px;font-size:12.4px;line-height:12.4px;color:#424242;transform:scaleX(0.9980);">31</span>
<span style="left:1276.88px;top:778px;font-size:12.4px;line-height:12.4px;color:#424242;transform:scaleX(0.9980);">32</span>
<span style="left:1191.88px;top:593px;font-size:12.4px;line-height:12.4px;color:#f44336;transform:scaleX(0.9639);">UCL : 0.012 mm</span>
<span style="left:1200.29px;top:687px;font-size:12.4px;line-height:12.4px;color:#4caf50;transform:scaleX(0.9664);">CL : 0.004 mm</span>
<span style="left:1217.63px;top:734px;font-size:12.4px;line-height:12.4px;color:#f44336;transform:scaleX(0.9556);">LCL : 0 mm</span>
<span style="left:57.10px;top:847px;font-size:12.4px;line-height:12.4px;color:#cfd8dc;transform:scaleX(0.9611);-webkit-text-stroke:.3px #cfd8dc;">Copyright 2021-2024 B-Systems Integration</span>
<span style="left:1159.54px;top:847px;font-size:12.4px;line-height:12.4px;color:#607d8b;transform:scaleX(0.9433);">Powered by COLLIDE Technology.</span>
<span style="left:245.56px;top:816px;font-size:12.4px;line-height:12.4px;color:#fff;transform:scaleX(0.9745);-webkit-text-stroke:.3px #fff;">Two out of three consecutive points in Zone A (+/-3 sigma)  or beyond</span>
</div></body></html>
